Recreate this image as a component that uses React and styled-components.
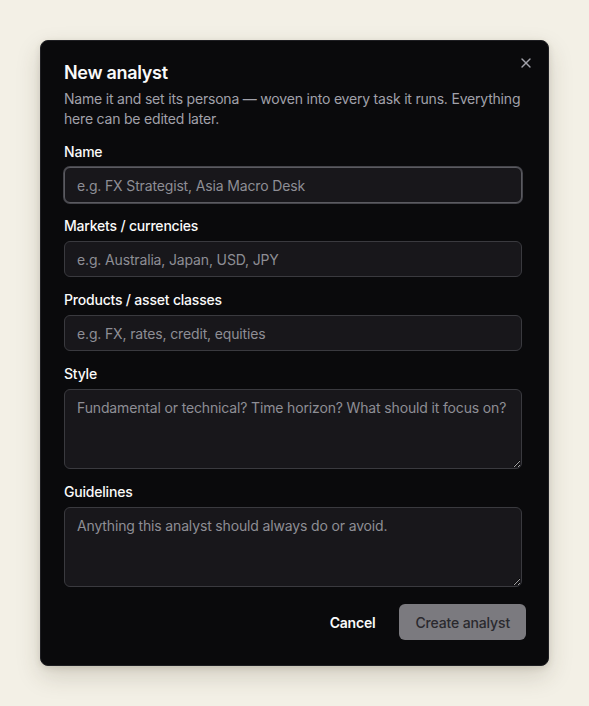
import React from "react";
import styled, { createGlobalStyle } from "styled-components";
import { X } from "lucide-react";

const GlobalStyle = createGlobalStyle`
	* {
		box-sizing: border-box;
	}
	html, body {
		margin: 0;
		padding: 0;
		background: #f3f0e6;
		font-family: Inter, "Noto Sans", "Liberation Sans", sans-serif;
	}
`;

const Page = styled.div`
	min-height: 706px;
	padding: 40px 40px 0 40px;
`;

const Dialog = styled.div`
	position: relative;
	width: 509px;
	background: #0a0a0c;
	border: 1px solid #1f1f23;
	border-radius: 8px;
	padding: 23px 22px 25px 23px;
	box-shadow: 0 10px 24px rgba(60, 50, 30, 0.18), 0 2px 6px rgba(60, 50, 30, 0.12);
	display: flex;
	flex-direction: column;
	gap: 16px;
`;

const CloseButton = styled.button`
	position: absolute;
	top: 14px;
	right: 14px;
	width: 16px;
	height: 16px;
	padding: 0;
	border: none;
	background: none;
	color: #a1a1aa;
	cursor: pointer;
	display: flex;
	align-items: center;
	justify-content: center;
`;

const Header = styled.div`
	display: flex;
	flex-direction: column;
	gap: 7px;
`;

const Title = styled.h2`
	margin: 0;
	font-size: 18px;
	line-height: 18px;
	font-weight: 600;
	color: #fafafa;
	letter-spacing: -0.3px;
`;

const Description = styled.p`
	margin: 0;
	font-size: 14px;
	line-height: 20px;
	color: #a1a1aa;
	letter-spacing: -0.2px;
`;

const Field = styled.div`
	display: flex;
	flex-direction: column;
	gap: 8px;
	padding-right: 4px;
`;

const Label = styled.label`
	font-size: 14px;
	line-height: 14px;
	font-weight: 500;
	color: #fafafa;
	letter-spacing: -0.2px;
`;

const Input = styled.input`
	height: 36px;
	width: 100%;
	padding: 0 12px;
	background: #18171b;
	border: 1px solid ${({ $focused }) => ($focused ? "#5b5b61" : "#3a3a3f")};
	box-shadow: ${({ $focused }) => ($focused ? "0 0 0 1px #45454b" : "none")};
	border-radius: 6px;
	font-family: inherit;
	font-size: 14px;
	letter-spacing: -0.15px;
	color: #fafafa;
	outline: none;

	&::placeholder {
		color: #8e8e95;
	}
`;

const TextArea = styled.textarea`
	height: 80px;
	width: 100%;
	padding: 8px 12px;
	background: #18171b;
	border: 1px solid #3a3a3f;
	border-radius: 6px;
	font-family: inherit;
	font-size: 14px;
	line-height: 20px;
	letter-spacing: -0.15px;
	color: #fafafa;
	outline: none;
	resize: vertical;
	display: block;

	&::placeholder {
		color: #8e8e95;
	}
`;

const Footer = styled.div`
	display: flex;
	justify-content: flex-end;
	align-items: center;
	gap: 8px;
	margin-top: 1px;
`;

const GhostButton = styled.button`
	height: 36px;
	padding: 0 16px;
	border: none;
	background: transparent;
	color: #fafafa;
	font-family: inherit;
	font-size: 14px;
	font-weight: 600;
	letter-spacing: -0.2px;
	border-radius: 6px;
	cursor: pointer;
`;

const PrimaryButton = styled.button`
	height: 36px;
	padding: 0 16px;
	border: none;
	background: #7b7a7f;
	color: #2a292e;
	font-family: inherit;
	font-size: 14px;
	font-weight: 500;
	letter-spacing: -0.15px;
	border-radius: 6px;
	cursor: not-allowed;
`;

const fields = [
	{ id: "name", label: "Name", placeholder: "e.g. FX Strategist, Asia Macro Desk", focused: true },
	{ id: "markets", label: "Markets / currencies", placeholder: "e.g. Australia, Japan, USD, JPY" },
	{ id: "products", label: "Products / asset classes", placeholder: "e.g. FX, rates, credit, equities" },
	{ id: "style", label: "Style", placeholder: "Fundamental or technical? Time horizon? What should it focus on?", multiline: true },
	{ id: "guidelines", label: "Guidelines", placeholder: "Anything this analyst should always do or avoid.", multiline: true },
];

export default function App() {
	return (
		<>
			<GlobalStyle />
			<Page>
				<Dialog role="dialog">
					<CloseButton aria-label="Close">
						<X size={16} strokeWidth={2} />
					</CloseButton>
					<Header>
						<Title>New analyst</Title>
						<Description>
							Name it and set its persona — woven into every task it runs. Everything here can be edited later.
						</Description>
					</Header>
					{fields.map((f) => (
						<Field key={f.id}>
							<Label htmlFor={f.id}>{f.label}</Label>
							{f.multiline ? (
								<TextArea id={f.id} placeholder={f.placeholder} />
							) : (
								<Input id={f.id} placeholder={f.placeholder} $focused={f.focused} />
							)}
						</Field>
					))}
					<Footer>
						<GhostButton>Cancel</GhostButton>
						<PrimaryButton disabled>Create analyst</PrimaryButton>
					</Footer>
				</Dialog>
			</Page>
		</>
	);
}
